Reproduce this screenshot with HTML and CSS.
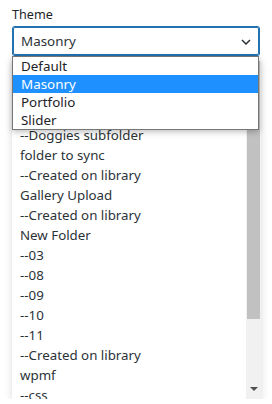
FILE: index.html
```html
<!DOCTYPE html>
<html lang="en">
<head>
<meta charset="UTF-8">
<title>Theme</title>
<link rel="stylesheet" href="styles.css">
</head>
<body>
    <div class="field">
        <label class="field-label">Theme</label>
        <div class="select-wrap">
            <div class="select">
                <span>Masonry</span>
                <svg class="chevron" width="10" height="6" viewBox="0 0 10 6"><path d="M1 1l4 4 4-4" fill="none" stroke="#2c3338" stroke-width="1.5"/></svg>
            </div>
            <ul class="menu">
                <li>Default</li>
                <li class="active">Masonry</li>
                <li>Portfolio</li>
                <li>Slider</li>
            </ul>
        </div>
    </div>

    <div class="listbox">
        <ul class="options">
            <li>--Doggies subfolder</li>
            <li>folder to sync</li>
            <li>--Created on library</li>
            <li>Gallery Upload</li>
            <li>--Created on library</li>
            <li>New Folder</li>
            <li>--03</li>
            <li>--08</li>
            <li>--09</li>
            <li>--10</li>
            <li>--11</li>
            <li>--Created on library</li>
            <li>wpmf</li>
            <li>--css</li>
        </ul>
        <div class="scrollbar">
            <div class="thumb"></div>
            <div class="arrow"></div>
        </div>
    </div>
</body>
</html>
```

FILE: styles.css
```css
body {
    margin: 0;
    padding: 6px 12px 0 12px;
    font-family: "Noto Sans", sans-serif;
    color: #2c3338;
    background: #fff;
}

.field-label {
    display: block;
    font-size: 12.6px;
    line-height: 18px;
    color: #1d2327;
    margin-bottom: 3px;
}

.select-wrap {
    position: relative;
}

.select {
    height: 26px;
    border: 1px solid #2271b1;
    box-shadow: 0 0 0 1px #2271b1;
    border-radius: 2px;
    margin: 0 1px;
    display: flex;
    align-items: center;
    justify-content: space-between;
    padding: 0 7px 0 7px;
    font-size: 13.4px;
}

.chevron {
    margin-top: 2px;
}

.menu {
    position: absolute;
    top: 29px;
    left: 0;
    right: 1px;
    margin: 0;
    padding: 0;
    list-style: none;
    background: #fff;
    border: 1px solid #767676;
    box-shadow: 0 2px 6px rgba(0, 0, 0, 0.25);
    z-index: 2;
}

.menu li {
    height: 18px;
    line-height: 18px;
    padding-left: 8px;
    font-size: 13.4px;
    color: #1d2327;
}

.menu li.active {
    background: #1e90ff;
    color: #fff;
}

.listbox {
    margin-top: 6px;
    height: 338px;
    display: flex;
    overflow: hidden;
    box-shadow: 0 2px 8px rgba(0, 0, 0, 0.15);
    margin-right: -1px;
}

.options {
    flex: 1;
    margin: 0;
    padding: 64px 0 0 0;
    list-style: none;
}

.options li {
    height: 20px;
    line-height: 20px;
    padding-left: 8px;
    font-size: 13.3px;
    white-space: nowrap;
}

.scrollbar {
    width: 15px;
    background: #f1f1f1;
    position: relative;
}

.thumb {
    margin: 0 1px;
    height: 258px;
    background: #c1c1c1;
}

.arrow {
    position: absolute;
    bottom: 8px;
    left: 4px;
    width: 0;
    height: 0;
    border-left: 4px solid transparent;
    border-right: 4px solid transparent;
    border-top: 4px solid #505050;
}
```
